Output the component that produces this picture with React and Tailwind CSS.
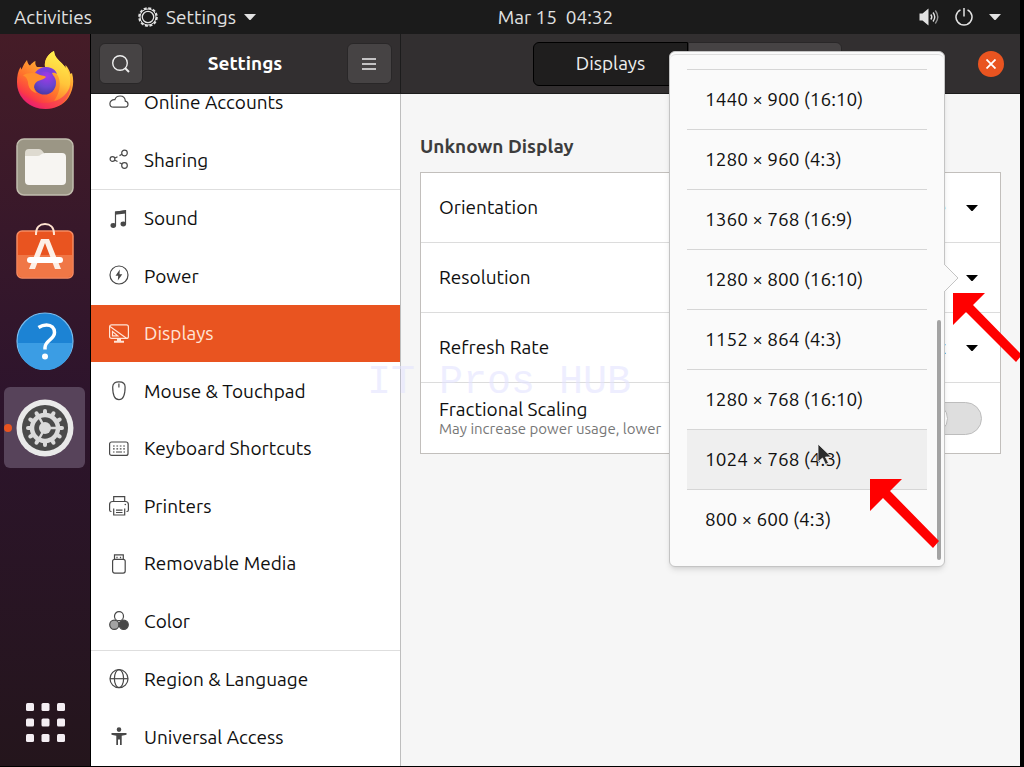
import React from "react";

const resolutions = [
  "1440 × 900 (16:10)",
  "1280 × 960 (4:3)",
  "1360 × 768 (16:9)",
  "1280 × 800 (16:10)",
  "1152 × 864 (4:3)",
  "1280 × 768 (16:10)",
  "1024 × 768 (4:3)",
  "800 × 600 (4:3)",
];

const icons = {
  cloud: (
    <path d="M4.5 14.2h11.2c2 0 3.3-1.300 3.300-3 0-1.700-1.200-2.900-2.700-3.100C16.200 4.900 13.900 3 11.100 3 8.500 3 6.600 4.400 5.900 6.700 3 6.500.9 8.300.9 10.700c0 2.100 1.500 3.500 3.600 3.500Z" />
  ),
  sharing: (
    <>
      <circle cx="3.500" cy="9" r="2.400" />
      <circle cx="15.500" cy="3" r="2.800" />
      <circle cx="15.500" cy="15.500" r="2.800" />
      <path d="M6 8l2.500-1.300M10.500 5.600 13 4.300M6 10.200l2.500 1.400M10.500 12.700l2.500 1.400" />
    </>
  ),
  sound: (
    <>
      <path d="M6.500 16V3.200L16.500 1.800V14.500" />
      <path d="M6 2.600 17 1.200v3.200L6 5.800Z" fill="currentColor" stroke="none" />
      <ellipse cx="4.300" cy="16.500" rx="2.800" ry="2.400" fill="currentColor" stroke="none" />
      <ellipse cx="14.300" cy="15" rx="2.800" ry="2.400" fill="currentColor" stroke="none" />
    </>
  ),
  power: (
    <>
      <circle cx="10" cy="9" r="9" />
      <path d="M10.800 3.500 6.500 9.800h2.700L8.800 14.500l4.500-6.300h-2.800Z" fill="currentColor" stroke="none" />
    </>
  ),
  displays: (
    <>
      <rect x=".6" y=".8" width="18.800" height="13.600" rx="2" />
      <path d="M1 2.500 17.500 14.200M3.500 7.500v4.300h5.300Z" />
      <path d="M8 14.500h4v2.300h3v2H5v-2h3Z" fill="currentColor" stroke="none" />
    </>
  ),
  mouse: (
    <>
      <path d="M9.500.8h.8c3 0 5.800 1.600 5.800 5.200 0 6.500-1.300 12.700-6.200 12.700S3.700 12.500 3.700 6C3.700 2.400 6.500.8 9.500.8Z" />
      <path d="M9.900 2.500v4" />
    </>
  ),
  keyboard: (
    <>
      <rect x=".6" y="3" width="18.400" height="13.400" rx="2" />
      <path d="M4 7h12M4 9.800h12" strokeDasharray="1.700 1.700" />
      <path d="M4 13h1.500M7 13h6M14.500 13H16" />
    </>
  ),
  printer: (
    <>
      <path d="M4.700 5.500V.7h11v4.800M2.500 15.500H2a1.500 1.500 0 0 1-1.400-1.500V8.500a3 3 0 0 1 3-3h12.800a3 3 0 0 1 3 3V14a1.500 1.500 0 0 1-1.400 1.500h-.5" />
      <path d="M4.700 12.500V19h11v-6.500M7 14.200h6.500M7 16.500h6.500" />
      <circle cx="16.300" cy="8.500" r=".8" fill="currentColor" stroke="none" />
    </>
  ),
  media: (
    <>
      <path d="M5.500 5V.8h8.800V5" />
      <path d="M8 2.800v1.500M11.500 2.800v1.500" />
      <rect x="3.600" y="5.300" width="12.600" height="13.800" rx="2" />
    </>
  ),
  color: (
    <>
      <circle cx="10" cy="5.200" r="4.500" />
      <circle cx="5.300" cy="13.800" r="4.600" fill="#a3a3a3" />
      <circle cx="14.700" cy="13.800" r="4.600" fill="currentColor" />
    </>
  ),
  region: (
    <>
      <circle cx="10" cy="8.700" r="9" />
      <ellipse cx="10" cy="8.700" rx="4.600" ry="9" />
      <path d="M1 8.700h18" />
    </>
  ),
  access: (
    <path
      d="M10 .3a2.300 2.300 0 1 1 0 4.600 2.300 2.300 0 0 1 0-4.600ZM2.500 6h15v1.700l-4.800 1V18h-1.700v-5.500H9V18H7.300V8.700l-4.800-1Z"
      fill="currentColor"
      stroke="none"
    />
  ),
};

const groups = [
  [
    ["Online Accounts", "cloud"],
    ["Sharing", "sharing"],
  ],
  [
    ["Sound", "sound"],
    ["Power", "power"],
    ["Displays", "displays"],
    ["Mouse & Touchpad", "mouse"],
    ["Keyboard Shortcuts", "keyboard"],
    ["Printers", "printer"],
    ["Removable Media", "media"],
    ["Color", "color"],
  ],
  [
    ["Region & Language", "region"],
    ["Universal Access", "access"],
  ],
];

const Caret = ({ className }) => (
  <svg viewBox="0 0 12 6" className={className} fill="currentColor" aria-hidden="true">
    <path d="M0 0h12L7 5.500q-1 1-2 0Z" />
  </svg>
);

const TopBar = () => (
  <header className="flex h-[34px] shrink-0 items-center bg-[#1b1b1b] text-[#e2e2e2]">
    <button className="w-[91px] shrink-0 pl-3.5 text-left">Activities</button>
    <div className="grid flex-1 grid-cols-[1fr_auto_1fr] items-center">
      <button className="ml-[47px] flex items-center gap-2 justify-self-start">
        <svg viewBox="0 0 20 20" className="size-5" fill="none" stroke="currentColor">
          <circle cx="10" cy="10" r="8.900" strokeWidth="1.800" strokeDasharray="3 1.660" />
          <circle cx="10" cy="10" r="8" strokeWidth="1" />
          <circle cx="10" cy="10" r="5.700" strokeWidth="1.300" />
        </svg>
        Settings
        <Caret className="w-3" />
      </button>
      <button className="whitespace-pre">Mar 15  04:32</button>
      <button aria-label="System menu" className="mr-[19px] flex items-center gap-4 justify-self-end">
        <svg viewBox="0 0 20 18" className="w-5" fill="none" stroke="currentColor" strokeWidth="1.400">
          <path d="M.5 5.500h3L9.500.5v17l-6-5h-3Z" fill="currentColor" stroke="none" />
          <path d="M11.800 6.500q2 2.500 0 5M14 4.500q3.500 4.500 0 9" />
          <path d="M16.300 2.500q5 6.500 0 13" opacity=".6" />
        </svg>
        <svg viewBox="0 0 18 18" className="w-[18px]" fill="none" stroke="currentColor" strokeWidth="1.500">
          <path d="M9 0v8.500M5.500 1.800a8 8 0 1 0 7 0" />
        </svg>
        <Caret className="w-3" />
      </button>
    </div>
  </header>
);

const Firefox = () => (
  <svg viewBox="0 0 58 58" className="size-[58px]">
    <defs>
      <linearGradient id="flame" x1=".85" y1=".1" x2=".3" y2="1">
        <stop offset="0" stopColor="#fff04f" />
        <stop offset=".3" stopColor="#ffa932" />
        <stop offset=".6" stopColor="#ff742c" />
        <stop offset=".85" stopColor="#fb3c44" />
        <stop offset="1" stopColor="#e31577" />
      </linearGradient>
      <linearGradient id="tail" x1=".6" y1="0" x2=".4" y2="1">
        <stop offset="0" stopColor="#fff44f" />
        <stop offset=".6" stopColor="#ffc53a" />
        <stop offset="1" stopColor="#ff7d2c" />
      </linearGradient>
      <radialGradient id="globe" cx=".6" cy=".2" r=".8">
        <stop offset="0" stopColor="#a238e8" />
        <stop offset=".6" stopColor="#6b45cf" />
        <stop offset="1" stopColor="#4a3aa8" />
      </radialGradient>
    </defs>
    <path
      d="M11 9c.5 3 1.500 4.500 3 5.500 1.500-2 3-3.500 5.500-4.500-.5 2.500 0 4.500 1.500 6h8C28 9 32 3 38 0c.5 6 4 8.500 8 12.500 1.500 1.500 2.500 3 3.500 5v-3.500c2.500 2.500 4 5.500 5 9l1.500-1c2.500 9 1 17.500-3.500 24.500C47.500 54 39 58 29.500 58 14 58 1 46.500 1 31c0-6 1-11 3.500-15l1 2.500C7 15 8.500 12 11 9Z"
      fill="url(#flame)"
    />
    <path
      d="M38 0c.5 6 4 8.500 8 12.500 5 5 9.500 11 8 21C52.500 43 45 49 38 50c5-7 7.500-16 4.500-24C40 20 34 20 29 16 28 9 32 3 38 0Z"
      fill="url(#tail)"
    />
    <path d="M19 22c4-6 11-7 16-5 3 1 5 3 6 6-2-1-3-1.500-5-1l2 5-12-2Z" fill="#7b3fdc" />
    <circle cx="28.500" cy="32" r="11.500" fill="url(#globe)" />
    <path
      d="M7 24.500c5-3.500 13-3 17-.5 2.500 1 5 .5 6 2-1.500 2.500-7 3-9.500 5-3.500 3-3 8 .5 11-6-1-9-6-9-11-1-3-2-5.500-5-6.500Z"
      fill="#ff8f2c"
    />
    <path d="M1 32c2 12 13 20 27 20 13 0 23-7 27-18-1 14-11 24-26 24C14 58 1 47 1 32Z" fill="#f02b6c" opacity=".4" />
  </svg>
);

const Files = () => (
  <svg viewBox="0 0 58 58" className="size-[58px]">
    <rect x="1" y="1" width="56" height="56" rx="7" fill="#9b9685" stroke="#c1bdae" strokeWidth="1.500" />
    <path d="M9 15q0-4 4-4h10q2 0 3 1.500l2 2.500v8H9Z" fill="#dedad0" />
    <path d="M9 18h12q2.500 0 4-1.500T29 15h17q4 0 4 4v24q0 4-4 4H13q-4 0-4-4Z" fill="#f7f5f2" />
  </svg>
);

const Software = () => (
  <svg viewBox="0 3 58 58" className="size-[58px] overflow-visible">
    <rect x="1" y="9" width="56" height="47" rx="5" fill="#e95420" stroke="#f58a62" strokeWidth="1.500" />
    <path d="M2 33h54v18q0 4-4 4H6q-4 0-4-4Z" fill="#f07746" />
    <path d="M20 13v-1C20 5 24 2 29 2s9 3 9 10v1" fill="none" stroke="#ffe3d0" strokeWidth="2" />
    <path d="M25 17h8l12 30h-6L29 21 19 47h-6Z" fill="#fdf0e7" />
    <rect x="11" y="35" width="36" height="6" rx="3" fill="#fff" />
  </svg>
);

const Help = () => (
  <svg viewBox="0 0 58 58" className="size-[58px]">
    <circle cx="29" cy="29" r="28" fill="#1c83d4" stroke="#79bdef" strokeWidth="1.200" />
    <path d="M1.600 31a27.400 27.400 0 0 0 54.800 0Z" fill="#3b9de4" />
    <path d="M22.500 15.500q4-2.500 8-2.500c5 0 8 3 8 7.500 0 7-9.500 8-9.500 15v2" fill="none" stroke="#fff" strokeWidth="3.500" />
    <circle cx="29" cy="44.500" r="3" fill="#fff" />
  </svg>
);

const Gear = () => (
  <svg viewBox="0 0 58 58" className="size-[58px]">
    <circle cx="29" cy="29" r="28.500" fill="#e9e9e9" />
    <circle cx="29" cy="29" r="23" fill="#4a4a4a" />
    <circle cx="29" cy="29" r="13" fill="none" stroke="#dadada" strokeWidth="4.500" />
    <g stroke="#dadada" strokeWidth="4" strokeLinecap="round">
      {[0, 30, 60, 90, 120, 150, 180, 210, 240, 270, 300, 330].map((angle) => (
        <path key={angle} d="M29 15v-3" transform={`rotate(${angle} 29 29)`} />
      ))}
    </g>
    <circle cx="29" cy="29" r="6" fill="#dadada" />
    <path d="M29 29h12M29 29l-6-11M29 29l-6 11" stroke="#dadada" strokeWidth="2.500" />
  </svg>
);

const Dock = () => (
  <aside className="flex w-[91px] shrink-0 flex-col items-center gap-1.5 border-r border-black bg-linear-to-b from-[#451c27] via-[#2d142c] to-[#24151c] pt-[5px] pr-px pb-1">
    <button aria-label="Firefox" className="grid size-[81px] place-items-center"><Firefox /></button>
    <button aria-label="Files" className="grid size-[81px] place-items-center"><Files /></button>
    <button aria-label="Software" className="grid size-[81px] place-items-center"><Software /></button>
    <button aria-label="Help" className="grid size-[81px] place-items-center"><Help /></button>
    <button aria-label="Settings" className="relative grid size-[81px] place-items-center rounded-md bg-[#57435a]">
      <span className="absolute left-0 size-2 rounded-full bg-[#e95420]" />
      <Gear />
    </button>
    <button aria-label="Show Applications" className="mt-auto grid size-[81px] place-items-center">
      <svg viewBox="0 0 40 40" className="size-10" fill="#f4eef3">
        {[0, 1, 2, 3, 4, 5, 6, 7, 8].map((n) => (
          <rect key={n} x={1 + (n % 3) * 15.5} y={1 + Math.floor(n / 3) * 15.5} width="8" height="8" rx="1.500" />
        ))}
      </svg>
    </button>
  </aside>
);

const Sidebar = () => (
  <nav className="min-h-0 flex-1 overflow-hidden border-r border-[#bebebe] bg-white">
    <div className="-mt-5">
      {groups.map((group) => (
        <ul key={group[0][0]} className="border-b border-[#dedede]">
          {group.map(([label, icon]) => (
            <li key={label} className="odd:h-[57px] even:h-[58px]">
              <a
                href="#"
                className={
                  label === "Displays"
                    ? "flex h-full items-center gap-[15px] bg-[#e95420] pl-[18px] text-[#ffe4d6]"
                    : "flex h-full items-center gap-[15px] pl-[18px] text-[#0f0f0f]"
                }
              >
                <svg
                  viewBox="0 0 20 20"
                  className={label === "Displays" ? "size-5 overflow-visible" : "size-5 overflow-visible text-[#484848]"}
                  fill="none"
                  stroke="currentColor"
                  strokeWidth="1.200"
                >
                  {icons[icon]}
                </svg>
                {label}
              </a>
            </li>
          ))}
        </ul>
      ))}
    </div>
  </nav>
);

const RedArrow = ({ className }) => (
  <svg viewBox="0 0 70 70" className={className} fill="#ff0000" aria-hidden="true">
    <path d="M0 0h32L20 12l49 50-6 7L13 19 0 32Z" />
  </svg>
);

const ResolutionMenu = () => (
  <div className="absolute -top-[192px] right-[55px] z-10 h-[516px] w-[276px] rounded-md border border-[#c4c4c4] bg-[#fafafa] px-[17px] pt-0.5 shadow-md">
    <div className="-mx-[17px] h-[15px] rounded-t-md border-t border-[#dedede]" />
    <ul role="listbox" aria-label="Resolution">
      {resolutions.map((item) => (
        <li
          key={item}
          role="option"
          aria-selected={item.startsWith("1024")}
          className={
            item.startsWith("1024")
              ? "h-[60px] border-t border-[#d6d6d6] bg-[#efefef]"
              : "h-[60px] border-t border-[#d6d6d6]"
          }
        >
          <button className="flex size-full items-center px-[18px]">{item}</button>
        </li>
      ))}
    </ul>
    <span className="absolute right-[3px] bottom-1.5 h-60 w-1 rounded-full bg-[#a3a3a3]" />
    <svg viewBox="0 0 15 28" className="absolute top-[212px] -right-[15px] h-7 w-[15px]">
      <path d="M0 0 14 14 0 28" fill="#fafafa" stroke="#c4c4c4" />
    </svg>
    {/* mouse pointer */}
    <svg viewBox="0 0 16 24" className="absolute top-[391px] left-[147px] h-6 w-4">
      <path d="M1 1v18l4.500-4 3 6.500 3-1.500-3-6h6Z" fill="#2b2b2b" stroke="#f5f5f5" strokeWidth=".8" />
    </svg>
    <RedArrow className="absolute top-[427px] left-[200px] h-[70px] w-[70px]" />
    <RedArrow className="absolute top-[241px] left-[283px] h-[70px] w-[70px]" />
  </div>
);

const SelectRow = ({ id, label, value }) => (
  <div className="relative flex h-[70px] items-center border-b border-[#dcdcdc] px-[18px]">
    <label htmlFor={id} className="shrink-0">{label}</label>
    <select id={id} className="ml-4 min-w-0 flex-1 appearance-none bg-transparent pr-9 text-right">
      <option>{value}</option>
    </select>
    <Caret className="pointer-events-none absolute right-[22px] w-3 text-black" />
  </div>
);

const DisplaysPanel = () => (
  <main className="min-h-0 flex-1 bg-[#f6f6f6] px-[19px] pt-10">
    <h2 className="leading-6 font-bold text-[#3d3d3d]">Unknown Display</h2>
    <section className="mt-3.5 border border-[#c2bfbc] bg-white text-[#0f0f0f]">
      <SelectRow id="orientation" label="Orientation" value="Landscape" />
      <div className="relative flex h-[70px] items-center justify-between border-b border-[#dcdcdc] px-[18px]">
        <span>Resolution</span>
        <button aria-label="Resolution" aria-haspopup="listbox" className="px-1 py-3">
          <Caret className="w-3 text-black" />
        </button>
        <ResolutionMenu />
      </div>
      <SelectRow id="refresh" label="Refresh Rate" value="60.00 Hz" />
      <div className="flex h-[70px] items-center justify-between px-[18px]">
        <label htmlFor="scaling" className="pt-0.5 whitespace-nowrap">
          <span className="block leading-5">Fractional Scaling</span>
          <span className="block text-[15px] leading-5 text-[#777]">May increase power usage, lower</span>
        </label>
        <input
          id="scaling"
          type="checkbox"
          role="switch"
          className="h-[33px] w-[66px] appearance-none rounded-full border border-[#bdbdbd] bg-[#dedede] before:block before:size-[31px] before:rounded-full before:border before:border-[#bdbdbd] before:bg-white"
        />
      </div>
    </section>
  </main>
);

const App = () => {
  return (
    <div className="relative flex h-screen flex-col overflow-hidden border-r-4 border-b border-black bg-[#f6f6f6] font-['Ubuntu','Noto_Sans',sans-serif] text-[19px]">
      <TopBar />
      <div className="flex min-h-0 flex-1">
        <Dock />
        <div className="flex w-[310px] shrink-0 flex-col">
          <div className="flex h-[60px] shrink-0 items-center justify-between border-r border-b border-[#1c1c1c] bg-[#322f30] px-2 text-white">
            <button aria-label="Search" className="grid h-[41px] w-11 place-items-center rounded-md border border-[#292728] bg-[#464344]">
              <svg viewBox="0 0 20 20" className="size-5" fill="none" stroke="#eee" strokeWidth="1.400">
                <circle cx="9" cy="9" r="7.300" />
                <path d="m14 14 4 4" strokeWidth="2" />
              </svg>
            </button>
            <h1 className="font-bold">Settings</h1>
            <button aria-label="Menu" className="grid h-[41px] w-[45px] place-items-center rounded-md border border-[#292728] bg-[#464344]">
              <svg viewBox="0 0 14 14" className="size-3.5" stroke="#eee" strokeWidth="1.500">
                <path d="M0 2h14M0 7h14M0 12h14" />
              </svg>
            </button>
          </div>
          <Sidebar />
        </div>
        <div className="flex min-w-0 flex-1 flex-col">
          <div className="flex h-[60px] shrink-0 items-center border-b border-[#1c1c1c] bg-[#322f30] pr-4 text-[#eee]">
            <div className="flex flex-1 justify-center">
              <button className="h-11 w-[155px] rounded-l-md border border-black bg-[#1f1e1e]">Displays</button>
              <button aria-label="Night Light" className="h-11 w-[154px] rounded-r-md border border-[#292728] bg-[#464344]" />
            </div>
            <button aria-label="Close" className="ml-1 grid size-[26px] place-items-center rounded-full bg-[#e95420]">
              <svg viewBox="0 0 10 10" className="size-2.5" stroke="#fff" strokeWidth="1.800">
                <path d="m.5.5 9 9M9.500.5l-9 9" />
              </svg>
            </button>
          </div>
          <DisplaysPanel />
        </div>
      </div>
      <p className="pointer-events-none absolute top-[369px] left-[367px] font-['Liberation_Mono',monospace] text-[40px] leading-7 whitespace-nowrap text-[#e4e4ff]/60">
        IT Pros HUB
      </p>
    </div>
  );
};

export default App;
